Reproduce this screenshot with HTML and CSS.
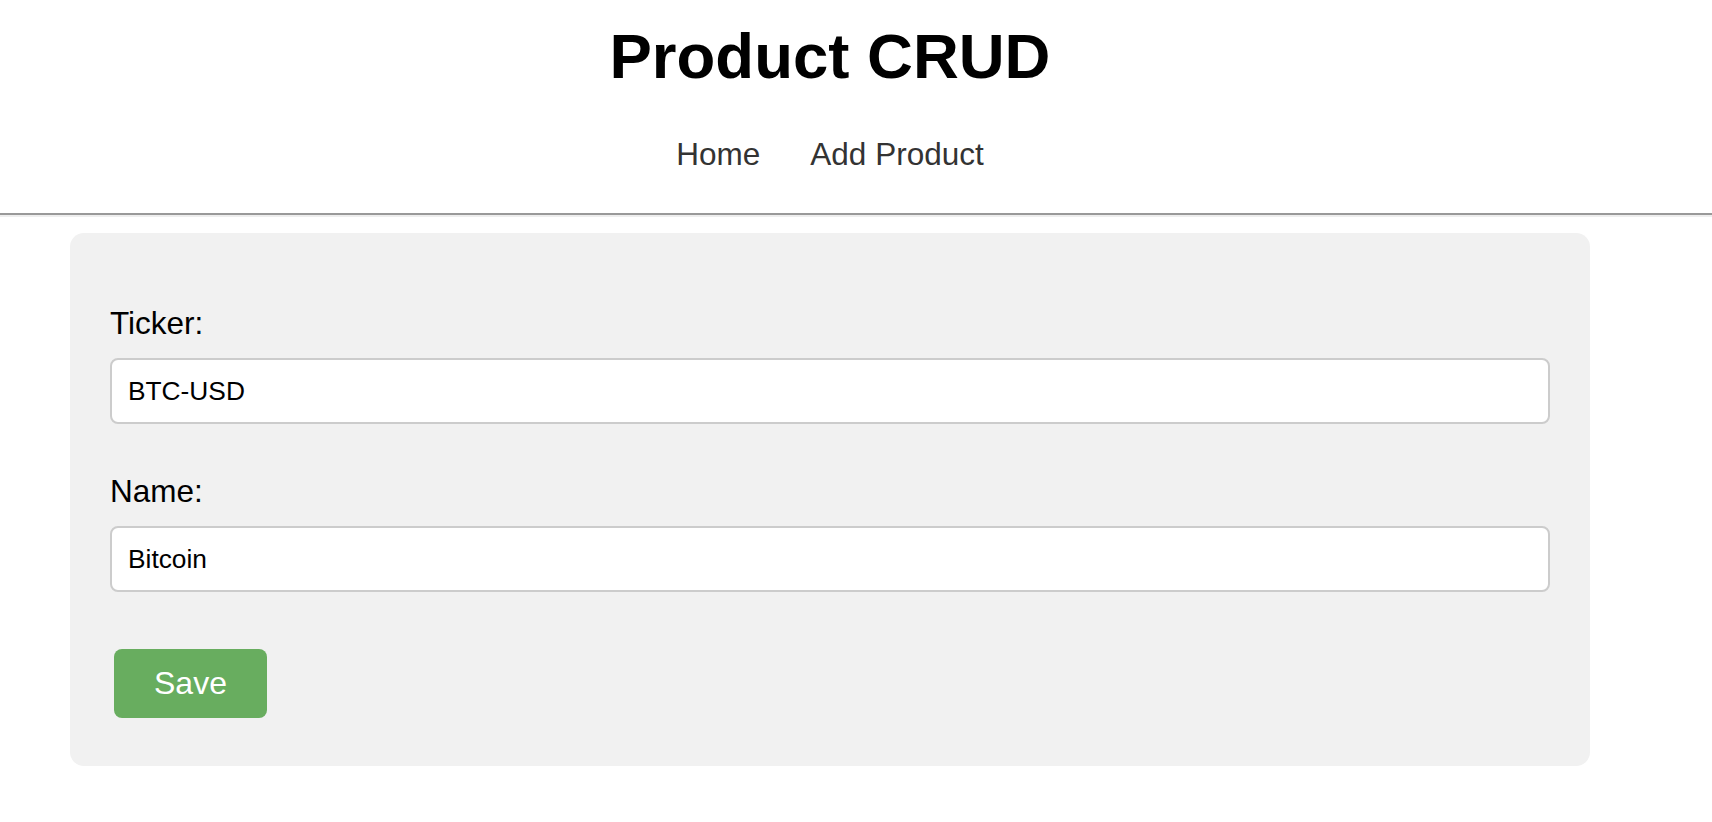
FILE: index.html
```html
<!DOCTYPE html>
<html lang="en">
<head>
<meta charset="utf-8">
<title>Product CRUD</title>
<link rel="stylesheet" href="styles.css">
</head>
<body>
  <header class="site-header">
    <h1 class="site-title">Product CRUD</h1>
    <nav class="site-nav">
      <a class="nav-link" href="#">Home</a>
      <a class="nav-link" href="#">Add Product</a>
    </nav>
  </header>
  <hr class="divider">
  <main class="page">
    <form class="card">
      <div class="form-group">
        <label class="field-label" for="ticker">Ticker:</label>
        <input class="field-input" id="ticker" type="text" value="BTC-USD">
      </div>
      <div class="form-group">
        <label class="field-label" for="name">Name:</label>
        <input class="field-input" id="name" type="text" value="Bitcoin">
      </div>
      <button class="save-btn" type="button">Save</button>
    </form>
  </main>
</body>
</html>
```

FILE: styles.css
```css
html, body {
  margin: 0;
  padding: 0;
  background: #ffffff;
}

body {
  font-family: "Liberation Sans", Arial, sans-serif;
  color: #000;
}

.site-header {
  width: 1660px;
  padding-top: 20px;
  display: flex;
  flex-direction: column;
  align-items: center;
}

.site-title {
  margin: 0 0 43px;
  font-size: 63.5px;
  line-height: 73px;
  font-weight: 700;
  color: #000;
}

.site-nav {
  display: flex;
  gap: 50px;
  height: 36px;
}

.nav-link {
  font-size: 31.5px;
  line-height: 36px;
  color: #333333;
  text-decoration: none;
}

.divider {
  margin: 41px 0 0;
  border: 0;
  border-top: 2px solid #999999;
  border-bottom: 2px solid #eeeeee;
  height: 0;
}

.page {
  width: 1660px;
  padding-top: 16px;
}

.card {
  margin: 0 70px;
  padding: 40px 40px 48px;
  background: #f1f1f1;
  border-radius: 14px;
  display: flex;
  flex-direction: column;
  align-items: flex-start;
}

.form-group {
  width: 100%;
  display: flex;
  flex-direction: column;
  margin-top: 32px;
}

.form-group + .form-group {
  margin-top: 49px;
}

.field-label {
  font-size: 31.5px;
  line-height: 36px;
  margin-bottom: 17px;
}

.field-input {
  box-sizing: border-box;
  width: 100%;
  height: 66px;
  margin: 0;
  padding: 0 16px;
  border: 2px solid #cccccc;
  border-radius: 8px;
  background: #fff;
  font-family: "Liberation Sans", Arial, sans-serif;
  font-size: 26.3px;
  color: #000;
  outline: none;
}

.save-btn {
  margin: 57px 0 0 4px;
  padding: 16px 40px;
  border: 0;
  border-radius: 8px;
  background: #68ad5f;
  color: #ffffff;
  font-family: "Liberation Sans", Arial, sans-serif;
  font-size: 32px;
  line-height: 37px;
  cursor: pointer;
}
```
